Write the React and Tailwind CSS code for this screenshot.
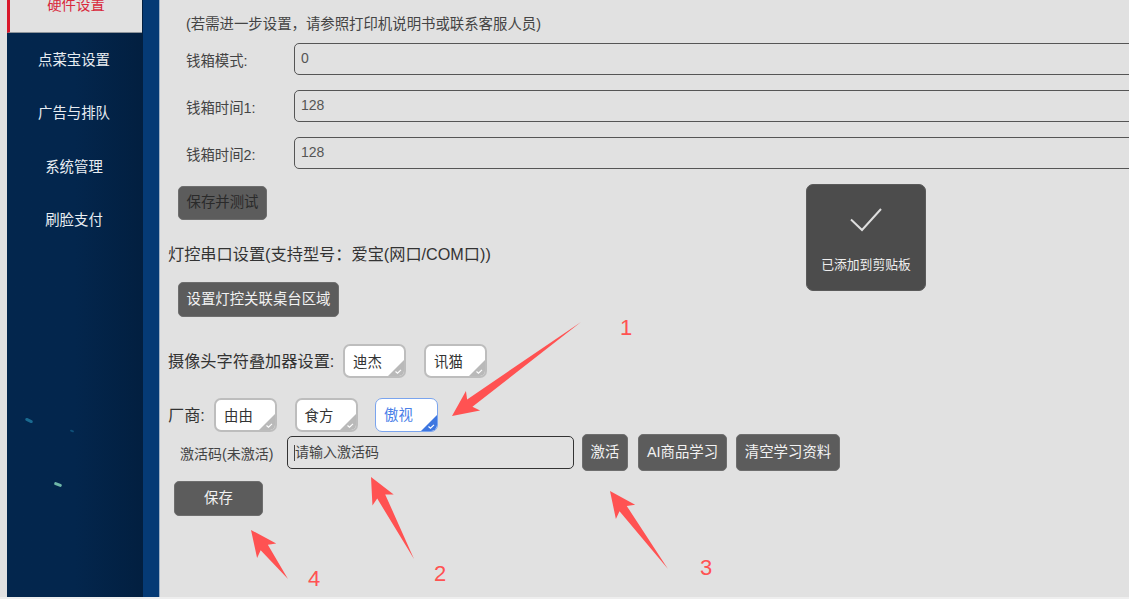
import React from "react";

const FONT = "font-['Liberation_Sans','Noto_Sans_CJK_SC',sans-serif]";

const menu = ["点菜宝设置", "广告与排队", "系统管理", "刷脸支付"];

// red annotation arrows, [tipX, tipY, tailX, tailY]
const arrows = [
  [452, 416, 581, 322],
  [371, 477, 414, 559],
  [610, 491, 668, 569],
  [251, 530, 288, 579],
];

const arrowPoints = ([x1, y1, x2, y2]) => {
  const len = Math.hypot(x2 - x1, y2 - y1);
  const ux = (x2 - x1) / len;
  const uy = (y2 - y1) / len;
  const at = (d, s) => `${x1 + ux * d - uy * s},${y1 + uy * d + ux * s}`;
  return [at(0, 0), at(26, 12), at(22, 4.5), at(len, 0), at(22, -4.5), at(26, -12)].join(" ");
};

const Field = ({ label, value }) => (
  <div className="flex items-center h-8 pl-[186px]">
    <span className="w-[108px] shrink-0 mt-[6px] text-[14.4px] text-[#444]">{label}</span>
    <div className="flex-1 h-8 -mr-4 pl-1.5 border border-[#555] rounded-[5px] text-sm leading-[28px] text-[#555]">
      {value}
    </div>
  </div>
);

const Button = ({ children, className = "" }) => (
  <button
    className={`flex items-center justify-center bg-[#5c5c5c] border border-[#6e6e6e] rounded-[5px] text-[14.4px] text-[#f2f2f2] ${className}`}
  >
    {children}
  </button>
);

const Chip = ({ label, active }) => (
  <div
    className={`relative w-[63px] h-[34px] pl-2 bg-white rounded-[7px] border text-[14.4px] leading-[33px] overflow-hidden ${
      active ? "border-[#7aa4ee] text-[#4a80e8]" : "border-[#bdbdbd] border-2 text-[#333]"
    }`}
  >
    {label}
    <svg className="absolute right-0 bottom-0" width="16" height="16" viewBox="0 0 16 16">
      <path d="M16 0V16H0Z" fill={active ? "#3d76e0" : "#b9b9b9"} />
      <path d="M7.5 11.5l2 1.6 3.5-3.2" fill="none" stroke="#fff" strokeWidth="1.2" />
    </svg>
  </div>
);

export default function App() {
  return (
    <div className={`relative flex h-[599px] overflow-hidden bg-[#e1e1e1] ${FONT}`}>
      {/* left nav */}
      <div className="relative ml-[7px] w-[136px] shrink-0 bg-gradient-to-r from-[#03264d] via-[#03264d] to-[#021f40]">
        <div className="flex items-center justify-center h-[33px] mr-px bg-[#e1e1e1] border-l-[3px] border-l-[#d9182b] border-b border-b-[#8d949b]">
          <span className="-mt-[20px] text-[14.4px] text-[#d9283c]">硬件设置</span>
        </div>
        <div className="flex flex-col pt-px pr-0.5">
          {menu.map((item) => (
            <div key={item} className="flex items-center justify-center h-[53.5px] text-[14.4px] text-[#e8edf2]">
              {item}
            </div>
          ))}
        </div>
        {/* specks in the background picture */}
        <div className="absolute left-[18px] top-[419px] w-2 h-[3px] rotate-[25deg] rounded-full bg-[#1a6a90]" />
        <div className="absolute left-[47px] top-[483px] w-2 h-[3px] rotate-[20deg] rounded-full bg-[#6fb7a8]" />
        <div className="absolute left-[63px] top-[430px] w-1 h-0.5 rotate-[20deg] rounded-full bg-[#0f4f78]" />
      </div>
      <div className="w-4 shrink-0 bg-[#053a75] border-r border-r-[#9fb0c4] box-content" />

      {/* content */}
      <div className="flex-1 min-w-0 -ml-[160px] flex flex-col pt-[16px]">
        <p className="pl-[186px] text-[14.4px] leading-4 text-[#444]">(若需进一步设置，请参照打印机说明书或联系客服人员)</p>
        <div className="mt-[11px] flex flex-col gap-[15px]">
          <Field label="钱箱模式:" value="0" />
          <Field label="钱箱时间1:" value="128" />
          <Field label="钱箱时间2:" value="128" />
        </div>
        <div className="pl-[178px] mt-[17px]">
          <Button className="w-[89px] h-[34px] !text-[#2a2a2a]">保存并测试</Button>
        </div>
        <p className="pl-[168px] mt-[24px] text-[16.2px] leading-5 text-[#333]">灯控串口设置(支持型号：爱宝(网口/COM口))</p>
        <div className="pl-[178px] mt-[18px]">
          <Button className="w-[161px] h-[35px]">设置灯控关联桌台区域</Button>
        </div>
        <div className="flex items-center pl-[168px] mt-[27px]">
          <span className="w-[175px] text-[16.2px] text-[#333]">摄像头字符叠加器设置:</span>
          <div className="flex gap-[18px]">
            <Chip label="迪杰" />
            <Chip label="讯猫" />
          </div>
        </div>
        <div className="flex items-center pl-[168px] mt-[20px]">
          <span className="w-[46px] text-[16.2px] text-[#333]">厂商:</span>
          <div className="flex gap-[17.5px]">
            <Chip label="由由" />
            <Chip label="食方" />
            <Chip label="傲视" active />
          </div>
        </div>
        <div className="flex items-center pl-[180px] mt-[2px]">
          <span className="w-[107px] mt-[3px] text-sm text-[#444]">激活码(未激活)</span>
          <div className="flex items-center w-[287px] h-[33px] pl-1.5 border border-[#333] rounded-[5px] text-sm text-[#444]">
            <span className="w-px h-4 bg-[#444]" />
            <span className="-mt-0.5">请输入激活码</span>
          </div>
          <Button className="ml-2 w-[46px] h-[37px]">激活</Button>
          <Button className="ml-2.5 w-[89px] h-[37px]">AI商品学习</Button>
          <Button className="ml-[9px] w-[104px] h-[37px]">清空学习资料</Button>
        </div>
        <div className="pl-[174px] mt-[10px]">
          <Button className="w-[89px] h-[35px]">保存</Button>
        </div>
      </div>

      {/* toast */}
      <div className="absolute left-[806px] top-[184px] w-[120px] h-[107px] flex flex-col items-center bg-[#4c4c4c] rounded-[7px] border border-[#5a5a5a]">
        <svg className="mt-[22px]" width="34" height="26" viewBox="0 0 34 26">
          <path d="M2 12.5l11 10.5L32 2" fill="none" stroke="#dedede" strokeWidth="2" />
        </svg>
        <span className="mt-[24px] text-[12.8px] leading-4 text-[#eee]">已添加到剪贴板</span>
      </div>

      {/* screenshot annotations */}
      <svg className="absolute inset-0 pointer-events-none" width="1129" height="599">
        {arrows.map((a) => (
          <polygon key={a[0]} points={arrowPoints(a)} fill="#ff5252" />
        ))}
      </svg>
      <span className="absolute left-[620px] top-[314px] text-[22px] leading-7 text-[#ff5252]">1</span>
      <span className="absolute left-[434px] top-[560px] text-[22px] leading-7 text-[#ff5252]">2</span>
      <span className="absolute left-[700px] top-[554px] text-[22px] leading-7 text-[#ff5252]">3</span>
      <span className="absolute left-[308px] top-[565px] text-[22px] leading-7 text-[#ff5252]">4</span>
      <div className="absolute left-0 right-0 bottom-0 h-0.5 bg-[#eeeeee]" />
    </div>
  );
}
